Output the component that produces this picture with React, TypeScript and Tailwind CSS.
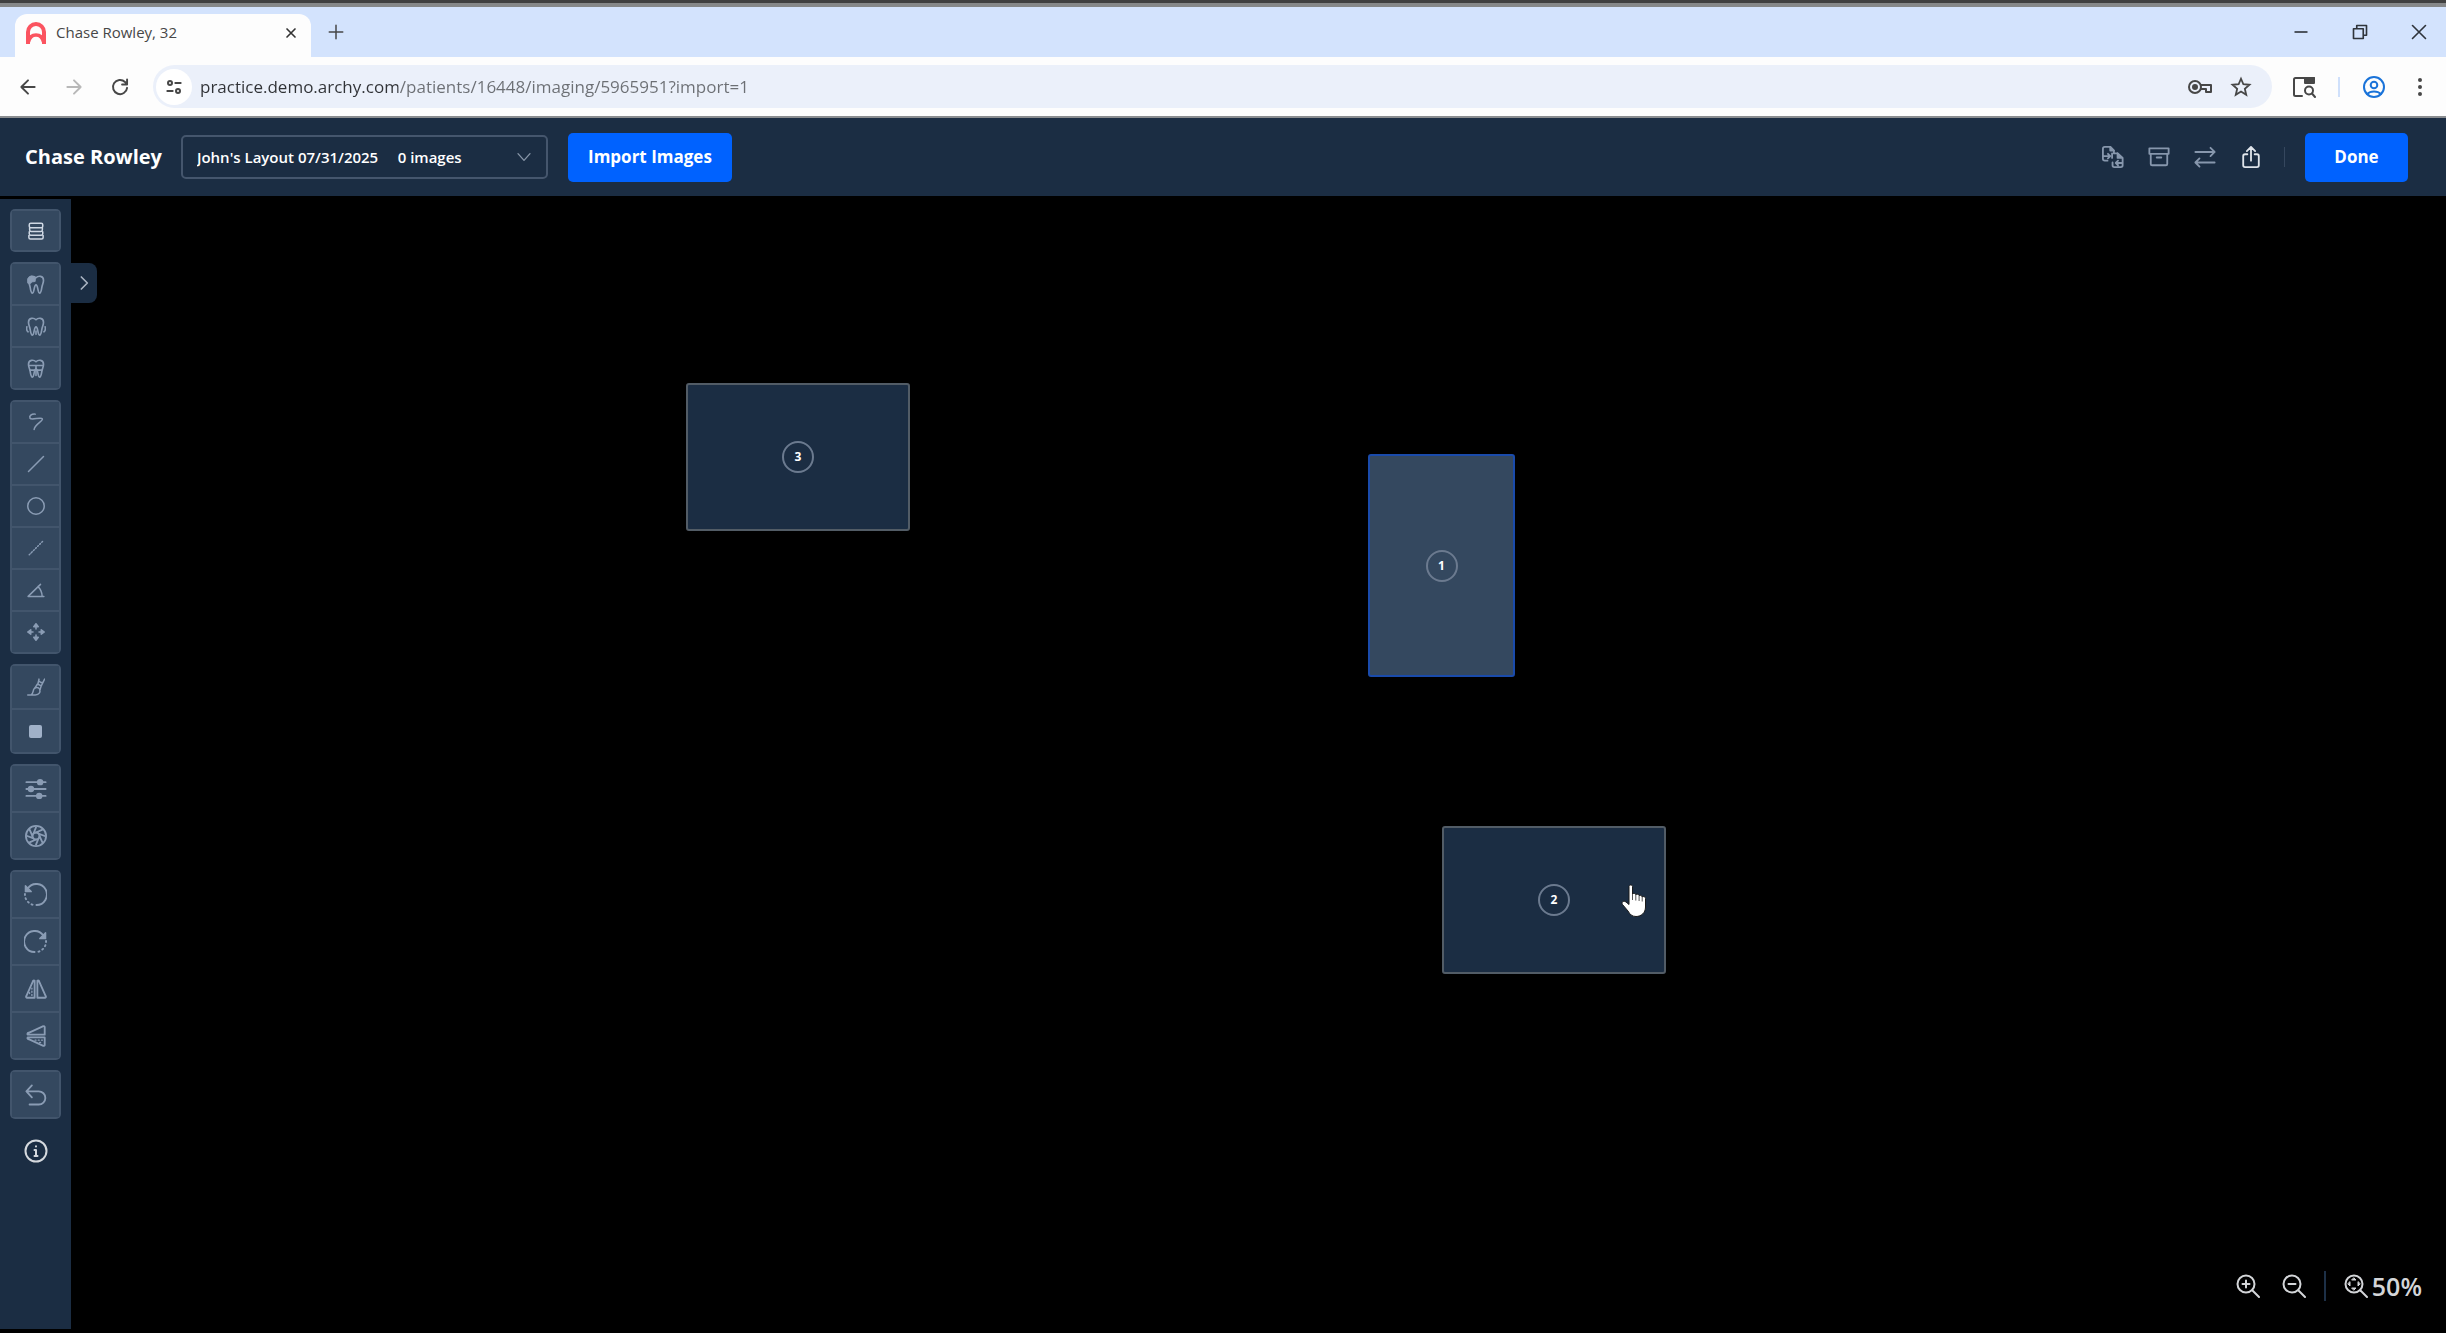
import { useState, type ReactNode } from 'react';
import clsx from 'clsx';

type IconProps = { children: ReactNode; className?: string };

function Icon({ children, className = 'size-[18px]' }: IconProps) {
  return (
    <svg
      viewBox="0 0 24 24"
      fill="none"
      stroke="currentColor"
      strokeWidth={2}
      strokeLinecap="round"
      strokeLinejoin="round"
      className={clsx('shrink-0', className)}
      aria-hidden="true"
    >
      {children}
    </svg>
  );
}

const TOOTH =
  'M12 4.500C9.500 2 3 1.500 3 7.500c0 3.500 1.500 5 2 8.500.4 3 1 7 2.800 7 2.200 0 1.700-10 4.200-10s2 10 4.200 10c1.800 0 2.400-4 2.800-7 .5-3.500 2-5 2-8.500 0-6-6.500-5.500-9-3z';

type Tool = { label: string; icon: ReactNode; bright?: boolean };
type ToolGroup = { id: string; itemClass: string; tools: Tool[] };

const groups: ToolGroup[] = [
  {
    id: 'Template',
    itemClass: 'h-[39px]',
    tools: [
      {
        label: 'Layouts',
        bright: true,
        icon: (
          <Icon>
            <rect x="3" y="1.500" width="18" height="6" rx="2" />
            <path d="M3.500 7.500v3a2 2 0 0 0 2 2h13a2 2 0 0 0 2-2v-3M3 13v2.500a2 2 0 0 0 2 2h14a2 2 0 0 0 2-2V13M2.500 18v2.500a2 2 0 0 0 2 2h15a2 2 0 0 0 2-2V18" />
          </Icon>
        ),
      },
    ],
  },
  {
    id: 'Teeth',
    itemClass: 'h-10',
    tools: [
      {
        label: 'Caries',
        icon: (
          <Icon className="size-5">
            <path d={TOOTH} />
            <path d="M2 10.500V5.500l4-3 5.500 2-.5 4.500-4 .5-1.500 2z" fill="currentColor" strokeWidth={1} />
          </Icon>
        ),
      },
      {
        label: 'Bone level',
        icon: (
          <Icon className="size-5">
            <path d={TOOTH} />
            <path d="M1 13c-.8 3 .2 5 1.500 6M23 13c.8 3-.2 5-1.500 6M12 18v4" />
          </Icon>
        ),
      },
      {
        label: 'Restorations',
        icon: (
          <Icon className="size-5">
            <path d={TOOTH} />
            <path d="M3.500 9h17M5 14.500h14M12 9v12" />
          </Icon>
        ),
      },
    ],
  },
  {
    id: 'Draw',
    itemClass: 'h-10',
    tools: [
      {
        label: 'Freehand',
        icon: (
          <Icon>
            <path d="M11 1.500C6 1 2.500 4 4 7c1.800 3 15-2 16.500.7 1.500 2.800-10.500 7.300-11 14.300" />
          </Icon>
        ),
      },
      { label: 'Line', icon: <Icon><path d="M2 22 22 2" /></Icon> },
      { label: 'Ellipse', icon: <Icon><circle cx="12" cy="12" r="11" /></Icon> },
      {
        label: 'Ruler',
        icon: (
          <Icon>
            <path d="M3 21 21 3" strokeDasharray="1 3" />
            <path d="M3 21 21 3" strokeWidth={1} />
          </Icon>
        ),
      },
      {
        label: 'Angle',
        icon: <Icon><path d="M1.500 20.500h21M1.500 20.500 18 4.500M14.500 7.500c3.500 3 5.500 7.500 5.700 13" /></Icon>,
      },
      {
        label: 'Move',
        icon: (
          <Icon>
            <path d="M12 3v5M12 16v5M3 12h5M16 12h5" />
            <path d="m12 1 3 4H9zM12 23l3-4H9zM1 12l4-3v6zM23 12l-4-3v6z" fill="currentColor" />
          </Icon>
        ),
      },
    ],
  },
  {
    id: 'Paint',
    itemClass: 'h-[42px]',
    tools: [
      {
        label: 'Brush',
        icon: (
          <Icon>
            <path d="M1 22.500h10c5.500 0 7-3.500 6-7.500-2-3.500-6.500-3-8 0-.9 2-.5 5.500-3.500 7.500" />
            <path d="m11 12.500 3-4.500 5 2.500-1.500 4.500M14.500 8 16 1.500M19 10.500l4.500-9M16.500 4.500l2 1.500 2.500-.5" />
          </Icon>
        ),
      },
      {
        label: 'Color',
        icon: <span className="size-[13px] rounded-[2px] bg-[#a0b1c8]" />,
      },
    ],
  },
  {
    id: 'Adjust',
    itemClass: 'h-[45px]',
    tools: [
      {
        label: 'Adjustments',
        icon: (
          <Icon className="size-[22px]">
            <path d="M1.500 4.500h21M1.500 12h21M1.500 19.500h21" />
            <circle cx="16.500" cy="4.500" r="2.500" fill="currentColor" />
            <circle cx="6.500" cy="12" r="2.500" fill="currentColor" />
            <circle cx="15.500" cy="19.500" r="2.500" fill="currentColor" />
          </Icon>
        ),
      },
      {
        label: 'Filters',
        icon: (
          <Icon className="size-[22px]">
            <circle cx="12" cy="12" r="11" />
            <circle cx="12" cy="12" r="3.800" />
            <path d="M12 8.200 19 5M14.700 9.300 21.500 12M15.800 12 19 19M14.700 14.700 12 21.500M12 15.800 5 19M9.300 14.700 2.500 12M8.200 12 5 5M9.300 9.300 12 2.500" />
          </Icon>
        ),
      },
    ],
  },
  {
    id: 'Transform',
    itemClass: 'h-[45px]',
    tools: [
      {
        label: 'Rotate left',
        icon: (
          <Icon className="size-[23px]">
            <path d="M4 5.500A11 11 0 1 1 13 23" />
            <path d="M1 11.500A11 11 0 0 0 11 23" strokeDasharray="1 3.500" />
            <path d="M1.500 3v6h6z" fill="currentColor" strokeWidth={1.500} />
          </Icon>
        ),
      },
      {
        label: 'Rotate right',
        icon: (
          <Icon className="size-[23px]">
            <path d="M20 5.500A11 11 0 1 0 11 23" />
            <path d="M23 11.500A11 11 0 0 1 13 23" strokeDasharray="1 3.500" />
            <path d="M22.500 3v6h-6z" fill="currentColor" strokeWidth={1.500} />
          </Icon>
        ),
      },
      {
        label: 'Flip horizontal',
        icon: (
          <Icon className="size-[22px]">
            <path d="M10.500 3v18.500H2.200a1 1 0 0 1-.9-1.500L8.500 4a1.200 1.200 0 0 1 2-1zM13.500 3v18.500h8.300a1 1 0 0 0 .9-1.500L15.500 4a1.200 1.200 0 0 0-2-1z" />
            <path d="M7.500 11v8M5 16v3" strokeWidth={1.500} strokeDasharray="1 2.500" />
          </Icon>
        ),
      },
      {
        label: 'Flip vertical',
        icon: (
          <Icon className="size-[22px]">
            <path d="M3 10.500h18.500V2.200a1 1 0 0 0-1.500-.9L4 8.500a1.200 1.200 0 0 0-1 2zM3 13.500h18.500v8.300a1 1 0 0 1-1.500.9L4 15.500a1.200 1.200 0 0 1-1-2z" />
            <path d="M11 16.500h8M16 19h3" strokeWidth={1.500} strokeDasharray="1 2.500" />
          </Icon>
        ),
      },
    ],
  },
  {
    id: 'History',
    itemClass: 'h-[45px]',
    tools: [
      {
        label: 'Undo',
        icon: (
          <Icon className="size-[22px]">
            <path d="M7.500 1.500 1.500 8l6 6.500M1.500 8H15a7.200 7.200 0 0 1 0 14.400H5" />
          </Icon>
        ),
      },
    ],
  },
];

const mounts = [
  { id: 3, className: 'left-[615px] top-[184px] h-[148px] w-56' },
  { id: 1, className: 'left-[1297px] top-[255px] h-[223px] w-[147px]' },
  { id: 2, className: 'left-[1371px] top-[627px] h-[148px] w-56' },
];

function BrowserChrome() {
  const [url, setUrl] = useState('practice.demo.archy.com/patients/16448/imaging/5965951?import=1');

  return (
    <div className="shrink-0 text-[#474747]">
      <div className="h-[7px] border-b-4 border-[#868889] bg-[#404040]" />

      {/* Tab strip */}
      <div className="flex h-[50px] items-end bg-[#d3e3fd] pl-[15px]">
        <div className="flex h-[43px] w-[296px] items-center rounded-t-xl bg-[#fdfdfd] pr-3 pl-[11px] pb-[6px]">
          <svg viewBox="0 0 20 22" className="h-[22px] w-5 shrink-0" fill="none" stroke="#fb5460" strokeWidth={4} aria-hidden="true">
            <path d="M2 22V10a8 8 0 0 1 16 0v12" />
            <path d="M2.500 20c1-5 3.500-7 7.500-7s6.500 2 7.500 7" strokeWidth={3.500} />
          </svg>
          <span className="ml-[10px] flex-1 text-[15px]">Chase Rowley, 32</span>
          <button aria-label="Close tab" className="text-[#333]">
            <Icon className="size-4"><path d="m6 6 12 12M18 6 6 18" strokeWidth={2.500} /></Icon>
          </button>
        </div>
        <button aria-label="New tab" className="mb-4 ml-4">
          <Icon className="size-[18px]"><path d="M12 3v18M3 12h18" /></Icon>
        </button>
        <div className="mb-3 ml-auto flex gap-[33px] pr-[14px] text-[#2f343b]">
          <button aria-label="Minimize">
            <Icon className="size-[26px]"><path d="M6 12h12" strokeWidth={1.500} strokeLinecap="butt" /></Icon>
          </button>
          <button aria-label="Restore">
            <Icon className="size-[26px]">
              <path d="M6 9h9v9H6zM9 9V6h9v9h-3" strokeWidth={1.500} />
            </Icon>
          </button>
          <button aria-label="Close window">
            <Icon className="size-[26px]"><path d="m6 6 12 12M18 6 6 18" strokeWidth={1.500} /></Icon>
          </button>
        </div>
      </div>

      {/* Toolbar */}
      <div className="flex h-[61px] items-center border-b-2 border-[#8a8d90] bg-[#fdfdfd]">
        <div className="flex gap-[26px] pl-[18px]">
          <button aria-label="Back">
            <Icon className="size-5"><path d="M20 12H4M12 4l-8 8 8 8" strokeWidth={2.300} /></Icon>
          </button>
          <button aria-label="Forward" className="text-[#b8b8b8]">
            <Icon className="size-5"><path d="M4 12h16M12 4l8 8-8 8" strokeWidth={2.300} /></Icon>
          </button>
          <button aria-label="Reload">
            <Icon className="size-5">
              <path d="M20.500 13A8.500 8.500 0 1 1 18 6l2.500 2.500M20.500 3v6h-6" strokeWidth={2.300} />
            </Icon>
          </button>
        </div>
        <div className="ml-[23px] flex h-[43px] flex-1 items-center rounded-full bg-[#ebf0fa] pr-5 pl-[3px]">
          <button aria-label="Site information" className="flex size-9 items-center justify-center rounded-full bg-white">
            <Icon className="size-4">
              <circle cx="6" cy="6" r="3" strokeWidth={3} />
              <path d="M14 6h8M2 18h8" strokeWidth={3} />
              <circle cx="18" cy="18" r="3" strokeWidth={3} />
            </Icon>
          </button>
          <input
            aria-label="Address"
            value={url}
            onChange={e => setUrl(e.target.value)}
            className="ml-2 h-8 flex-1 bg-[linear-gradient(to_right,#303236_198px,#6c6f74_198px)] bg-clip-text text-[17px] text-transparent outline-none"
          />
          <button aria-label="Passwords">
            <Icon className="size-6">
              <circle cx="7" cy="12" r="6" />
              <circle cx="7" cy="12" r="2" fill="currentColor" />
              <path d="M13 10h10v7h-5v-3h-5" />
            </Icon>
          </button>
          <button aria-label="Bookmark" className="ml-[18px]">
            <Icon className="size-[22px]">
              <path d="m12 3 2.600 6 6.600.6-5 4.400 1.500 6.500L12 17l-5.700 3.500L7.800 14l-5-4.400 6.600-.6z" strokeLinejoin="miter" />
            </Icon>
          </button>
        </div>
        <button aria-label="Search tabs" className="ml-5">
          <Icon className="size-6">
            <path d="M10 21H3.500A1.500 1.500 0 0 1 2 19.500v-15A1.500 1.500 0 0 1 3.500 3H22" />
            <path d="M13 3h9v5h-9z" fill="currentColor" />
            <circle cx="17" cy="15.500" r="4" />
            <path d="m20 18.500 3 3.500" />
          </Icon>
        </button>
        <span className="ml-[22px] h-5 w-[2px] bg-[#cfe0fb]" />
        <button aria-label="Profile" className="ml-[22px] text-[#1a73d9]">
          <Icon className="size-6">
            <circle cx="12" cy="12" r="10" />
            <circle cx="12" cy="10" r="3.300" />
            <path d="M5 19c3.500-3.500 10.500-3.500 14 0" />
          </Icon>
        </button>
        <button aria-label="Browser menu" className="mr-[14px] ml-[22px]">
          <Icon className="size-6">
            <g fill="currentColor" stroke="none">
              <circle cx="12" cy="5" r="2" />
              <circle cx="12" cy="12" r="2" />
              <circle cx="12" cy="19" r="2" />
            </g>
          </Icon>
        </button>
      </div>
    </div>
  );
}

function Header() {
  return (
    <header className="flex h-[78px] shrink-0 items-center bg-[#1b2d43] pr-[38px] pl-[25px] text-white">
      <h1 className="text-[20px] font-bold">Chase Rowley</h1>
      <div className="relative ml-[19px]">
        <select
          aria-label="Layout"
          className="h-[44px] w-[367px] appearance-none rounded-[5px] border-2 border-[#45566d] bg-[#1b2d43] pl-[14px] text-[15px] font-semibold"
        >
          <option>{"John's Layout 07/31/2025\u00a0\u00a0\u00a0\u00a0\u00a00 images"}</option>
        </select>
        <Icon className="pointer-events-none absolute top-[14px] right-4 size-4 text-[#8896a8]">
          <path d="m3 7 9 10 9-10" />
        </Icon>
      </div>
      <button className="ml-5 h-[49px] w-[164px] rounded-[5px] bg-[#0062ff] text-[17px] font-bold">
        Import Images
      </button>

      <div className="ml-auto flex items-center gap-6 text-[#8797ad]">
        <button aria-label="Copy images">
          <Icon className="size-[22px]">
            <path d="M6 16H3a2 2 0 0 1-2-2V3a2 2 0 0 1 2-2h6l4 4v3M1 11h8M6.500 8.500 9 11l-2.500 2.500" />
            <path d="M9 1v4h4zM17 8v5h5z" fill="currentColor" />
            <path d="M13 8h4l5.500 5v8a2 2 0 0 1-2 2h-7a2 2 0 0 1-2-2v-3M11 13V8M22.500 18.500H15M17.500 16 15 18.500l2.500 2.500" />
          </Icon>
        </button>
        <button aria-label="Archive">
          <Icon className="size-[22px]">
            <path d="M1.500 2.500h21v6h-21zM3 8.500v11A1.500 1.500 0 0 0 4.500 21h15a1.500 1.500 0 0 0 1.500-1.500v-11M9.500 12.500h5" />
          </Icon>
        </button>
        <button aria-label="Transfer">
          <Icon className="size-[22px]">
            <path d="M1.500 6.500h21M18 2l4.500 4.500L18 11M22.500 18h-21M6 13.500 1.500 18 6 22.500" />
          </Icon>
        </button>
        <button aria-label="Export" className="text-[#dfe4ea]">
          <Icon className="size-[22px]">
            <path d="M8 9H5.500a2 2 0 0 0-2 2v10a2 2 0 0 0 2 2h13a2 2 0 0 0 2-2V11a2 2 0 0 0-2-2H16M12 16V1.500M7.500 5.500 12 1l4.500 4.500" />
          </Icon>
        </button>
      </div>
      <span className="ml-[22px] h-5 w-px bg-[#35475e]" />
      <button className="ml-5 h-[49px] w-[103px] rounded-[5px] bg-[#0062ff] text-[17px] font-bold">
        Done
      </button>
    </header>
  );
}

function Sidebar() {
  return (
    <aside className="relative flex w-[71px] shrink-0 flex-col items-center gap-[10px] bg-[#1b2d43] pt-[10px]">
      {groups.map(group => (
        <div
          key={group.id}
          role="group"
          aria-label={group.id}
          className="flex w-[51px] flex-col gap-[2px] overflow-hidden rounded-[5px] bg-[#42556c] p-[2px]"
        >
          {group.tools.map(tool => (
            <button
              key={tool.label}
              aria-label={tool.label}
              className={clsx(
                'flex items-center justify-center bg-[#34485f]',
                group.itemClass,
                tool.bright ? 'text-[#cfd8e4]' : 'text-[#8a9cb4]'
              )}
            >
              {tool.icon}
            </button>
          ))}
        </div>
      ))}
      <button aria-label="Information" className="mt-[10px] text-[#d5d9de]">
        <Icon className="size-6">
          <circle cx="12" cy="12" r="10.500" />
          <path d="M12 11v6M10.500 11H12M10.500 17h3M12 7.200v.3" />
        </Icon>
      </button>

      <button
        aria-label="Expand panel"
        className="absolute top-16 left-full flex h-10 w-[26px] items-center justify-center rounded-r-lg bg-[#1b2d43] text-[#a9b3c1]"
      >
        <Icon className="size-4"><path d="m8 3 9 9-9 9" strokeWidth={2.500} /></Icon>
      </button>
    </aside>
  );
}

export default function App() {
  const [selected, setSelected] = useState(1);

  return (
    <div className="flex h-screen flex-col overflow-hidden bg-black font-['Open_Sans',sans-serif]">
      <BrowserChrome />
      <Header />

      <div className="flex min-h-0 flex-1 pt-[3px] pb-1">
        <Sidebar />

        <main className="relative min-w-0 flex-1">
          {mounts.map(mount => (
            <button
              key={mount.id}
              onClick={() => setSelected(mount.id)}
              className={clsx(
                'absolute flex items-center justify-center rounded-[3px] border-2',
                mount.className,
                mount.id === selected ? 'border-[#1a4bab] bg-[#34485f]' : 'border-[#525c66] bg-[#1b2d43]'
              )}
            >
              <span className="flex size-8 items-center justify-center rounded-full border-2 border-[#6b7a8f] text-[12px] font-bold text-white">
                {mount.id}
              </span>
            </button>
          ))}

          {/* Pointer */}
          <svg viewBox="0 0 26 34" className="pointer-events-none absolute top-[685px] left-[1550px] h-[34px] w-[26px]" aria-hidden="true">
            <path
              d="M8 2.500c0-2 3.500-2 3.500 0V10c1-1 3-.7 3.300.7 1.200-1 3-.5 3.300.9 1.300-.8 2.900-.1 2.900 1.200 1.600-.7 3.500 0 3.500 1.700V23c0 6-4.500 9.500-9.500 9.500-4 0-6-2-8-5.500l-5.500-6.500c-1.500-2 1-4.500 3.500-2.500l3 2.500z"
              fill="#fff"
              stroke="#1a1a1a"
              strokeWidth={1}
            />
            <path d="M11.500 10v6M14.800 11v5.500M18.100 12v5M21.200 13v4.500" stroke="#555" strokeWidth={1} />
          </svg>

          <div className="absolute right-6 bottom-6 flex items-center text-[#d3d5d8]">
            <button aria-label="Zoom in">
              <Icon className="size-6">
                <circle cx="10" cy="10" r="8.500" />
                <path d="m16.500 16.500 6.500 6.500M10 6.500v7M6.500 10h7" />
              </Icon>
            </button>
            <button aria-label="Zoom out" className="ml-[22px]">
              <Icon className="size-6">
                <circle cx="10" cy="10" r="8.500" />
                <path d="m16.500 16.500 6.500 6.500M6.500 10h7" />
              </Icon>
            </button>
            <span className="ml-[18px] h-[30px] w-[2px] bg-[#1d3047]" />
            <button className="ml-[18px] flex items-center text-[25px] font-semibold">
              <Icon className="mr-1 size-6">
                <circle cx="10" cy="10" r="8.500" />
                <path d="m16.500 16.500 6.500 6.500" />
                <path d="M8 6h4l-2-2zM8 14h4l-2 2zM6 8v4l-2-2zM14 8v4l2-2z" fill="currentColor" strokeWidth={1} />
              </Icon>
              50%
            </button>
          </div>
        </main>
      </div>
    </div>
  );
}
